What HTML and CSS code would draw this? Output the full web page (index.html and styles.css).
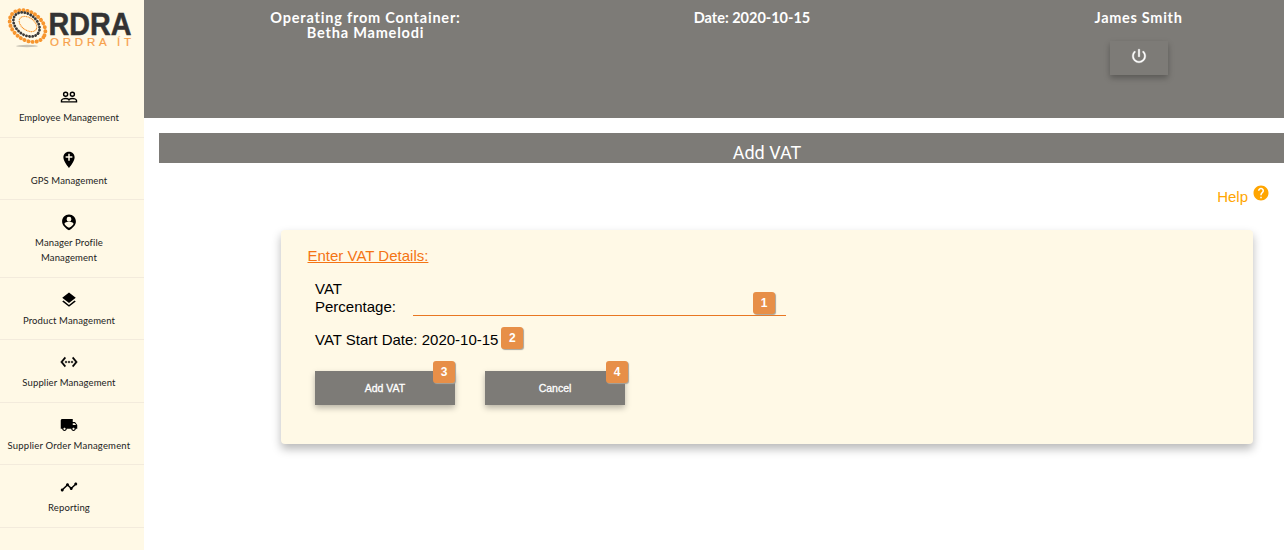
FILE: index.html
```html
<!DOCTYPE html>
<html lang="en">
<head>
<meta charset="utf-8">
<title>Add VAT</title>
<link rel="stylesheet" href="styles.css">
</head>
<body>
<div class="app">
  <aside class="sidebar">
    <svg class="logo" width="144" height="52" viewBox="0 0 144 52">
      <ellipse class="logo-shadow" cx="27" cy="46" rx="11" ry="1.2"/>
      <g fill="none" stroke-linecap="round">
        <ellipse class="ring-orange" cx="27.5" cy="26" rx="19.5" ry="13.800" transform="rotate(35 27.5 26)" stroke-width="3.9" stroke-dasharray="0.1 4"/>
        <ellipse class="ring-dark" cx="26.5" cy="24.5" rx="14.6" ry="10.2" transform="rotate(38 26.5 24.5)" stroke-width="2.8" stroke-dasharray="0.1 3"/>
        <ellipse class="ring-orange" cx="28" cy="24" rx="9.8" ry="6.3" transform="rotate(35 28 24)" stroke-width="1.3" stroke-dasharray="0.1 1.6"/>
      </g>
      <text class="logo-name" x="48.5" y="34.5" textLength="83" lengthAdjust="spacingAndGlyphs">RDRA</text>
      <text class="logo-sub" x="50" y="46" textLength="81">ORDRA ÍT</text>
    </svg>
    <nav class="menu">
      <a class="item"><svg class="icon" viewBox="0 0 24 24"><g fill="none" stroke="#000" stroke-width="1.9"><circle cx="7.5" cy="8.3" r="2.7"/><circle cx="16.5" cy="8.3" r="2.7"/><path d="M2 18.5v-1.700c0-1.500 3-2.700 5.500-2.700s4.500 1.200 4.500 2.700c0-1.500 2-2.700 4.500-2.700s5.500 1.200 5.500 2.700v1.700z"/></g></svg><span class="label">Employee Management</span></a>
      <a class="item"><svg class="icon" viewBox="0 0 24 24"><path d="M12 1c-4.700 0-7.500 3.500-7.500 7.600C4.500 14 12 22.500 12 22.500s7.500-8.500 7.500-13.900C19.500 4.500 16.700 1 12 1zm4.500 8H13v4h-2V9H7.500V7H11V3.500h2V7h3.500z"/></svg><span class="label">GPS Management</span></a>
      <a class="item"><svg class="icon" viewBox="0 0 24 24"><path d="M12 2C6.900 2 2.800 6.100 2.800 11.200c0 4.700 3.800 8.400 9.200 11.800 5.400-3.400 9.200-7.100 9.200-11.800C21.200 6.100 17.100 2 12 2zm0 3a3.200 3.200 0 1 1 0 6.400A3.200 3.200 0 0 1 12 5zm0 14.500c-3-1.500-5-3.200-6-5 .1-2 4-2.700 6-2.700s5.900.7 6 2.700c-1 1.800-3 3.500-6 5z"/></svg><span class="label">Manager Profile<br>Management</span></a>
      <a class="item"><svg class="icon" viewBox="0 0 24 24"><path d="M11.990 18.540l-7.370-5.730L3 14.070l9 7 9-7-1.630-1.270-7.380 5.740zM12 16l7.360-5.730L21 9l-9-7-9 7 1.630 1.270L12 16z"/></svg><span class="label">Product Management</span></a>
      <a class="item"><svg class="icon" viewBox="0 0 24 24"><path d="M7.770 6.760L6.230 5.480.82 12l5.410 6.520 1.540-1.280L3.420 12l4.350-5.240zM7 13h2v-2H7v2zm10-2h-2v2h2v-2zm-6 2h2v-2h-2v2zm6.770-7.520l-1.540 1.280L20.580 12l-4.350 5.240 1.540 1.280L23.180 12l-5.410-6.520z" stroke="#000" stroke-width=".5"/></svg><span class="label">Supplier Management</span></a>
      <a class="item"><svg class="icon" viewBox="0 0 24 24"><path d="M20 8h-3V4H3c-1.100 0-2 .9-2 2v11h2c0 1.660 1.340 3 3 3s3-1.340 3-3h6c0 1.660 1.340 3 3 3s3-1.340 3-3h2v-5l-3-4zM6 18.500c-.83 0-1.500-.67-1.500-1.500s.67-1.500 1.500-1.500 1.500.67 1.500 1.500-.67 1.500-1.500 1.500zm13.500-9l1.960 2.500H17V9.500h2.500zm-1.500 9c-.83 0-1.500-.67-1.500-1.500s.67-1.500 1.500-1.500 1.500.67 1.500 1.500-.67 1.500-1.500 1.500z"/></svg><span class="label label-wide">Supplier Order Management</span></a>
      <a class="item"><svg class="icon" viewBox="0 0 24 24"><path d="M23 8c0 1.100-.9 2-2 2-.18 0-.35-.02-.51-.07l-3.560 3.550c.05.16.07.34.07.52 0 1.100-.9 2-2 2s-2-.9-2-2c0-.18.02-.36.07-.52l-2.550-2.550c-.16.05-.34.07-.52.07s-.36-.02-.52-.07l-4.550 4.560c.05.160.07.330.07.510 0 1.100-.9 2-2 2s-2-.9-2-2 .9-2 2-2c.18 0 .35.02.51.07l4.560-4.550C8.020 9.360 8 9.180 8 9c0-1.100.9-2 2-2s2 .9 2 2c0 .18-.02.36-.07.52l2.550 2.550c.16-.05.34-.07.52-.07s.36.02.52.07l3.550-3.560C19.020 8.350 19 8.180 19 8c0-1.100.9-2 2-2s2 .9 2 2z"/></svg><span class="label">Reporting</span></a>
    </nav>
  </aside>
  <main class="main">
    <header class="topbar">
      <div class="top-cell container-name">Operating from Container:<br>Betha Mamelodi</div>
      <div class="top-cell date">Date: 2020-10-15</div>
      <div class="top-cell user">
        <span>James Smith</span>
        <button class="power" aria-label="Log out"><svg width="18" height="18" viewBox="0 0 24 24"><path fill="#fff" stroke="#fff" stroke-width=".5" d="M13 3h-2v10h2V3zm4.830 2.170l-1.420 1.420C17.990 7.860 19 9.810 19 12c0 3.870-3.130 7-7 7s-7-3.130-7-7c0-2.190 1.010-4.140 2.580-5.420L6.170 5.170C4.230 6.820 3 9.260 3 12c0 4.970 4.030 9 9 9s9-4.030 9-9c0-2.740-1.230-5.180-3.170-6.830z"/></svg></button>
      </div>
    </header>
    <h1 class="title">Add VAT</h1>
    <div class="help"><span>Help</span><svg width="18" height="18" viewBox="0 0 24 24"><path fill="orange" d="M12 2C6.480 2 2 6.480 2 12s4.480 10 10 10 10-4.480 10-10S17.520 2 12 2zm1 17h-2v-2h2v2zm2.070-7.750l-.9.920C13.450 12.900 13 13.500 13 15h-2v-.5c0-1.100.45-2.100 1.170-2.830l1.240-1.260c.37-.36.59-.86.59-1.410 0-1.100-.9-2-2-2s-2 .9-2 2H8c0-2.210 1.790-4 4-4s4 1.790 4 4c0 .88-.36 1.680-.93 2.250z"/></svg></div>
    <section class="card">
      <h2 class="card-title">Enter VAT Details:</h2>
      <div class="field">
        <label class="field-label">VAT Percentage:</label>
        <div class="input"><span class="badge b1">1</span></div>
      </div>
      <div class="start-date"><span class="start-text">VAT Start Date: 2020-10-15</span><span class="badge">2</span></div>
      <div class="actions">
        <button class="btn">Add VAT<span class="badge b3">3</span></button>
        <button class="btn">Cancel<span class="badge b4">4</span></button>
      </div>
    </section>
  </main>
</div>
</body>
</html>
```
FILE: styles.css
```css
* { box-sizing: border-box; }
body { margin: 0; overflow: hidden; background: #fff; font-family: "Liberation Sans", Arial, sans-serif; }
.app { display: flex; height: 550px; }
.sidebar { width: 144px; flex: none; background: #fff9e6; }
.logo { display: block; }
.logo-shadow { fill: #c9c3b5; }
.ring-orange { stroke: #f7962f; }
.ring-dark { stroke: #3c3a38; }
.logo-name { font: bold 32px "Liberation Sans", sans-serif; fill: #333; stroke: #333; stroke-width: .5px; }
.logo-sub { font: 11.5px "Liberation Sans", sans-serif; fill: #f7a04a; stroke: #f7a04a; stroke-width: .2px; }
.menu { padding-top: 23.3px; }
.item { display: flex; flex-direction: column; align-items: center; padding: 13px 0 11.5px; border-bottom: 1px solid #f3ebdc; }
.icon { width: 18px; height: 18px; margin-right: 6px; }
.label { margin: 4px 6px 0 0; font: 9.5px/15px Lato, sans-serif; letter-spacing: .12px; color: #222; text-align: center; white-space: nowrap; }
.label-wide { letter-spacing: .2px; }
.main { flex: 1; min-width: 0; }
.topbar { display: flex; height: 118px; background: #7d7b77; color: #fff; font: bold 14.5px/15px Lato, sans-serif; text-align: center; }
.top-cell { flex: none; padding-top: 10px; white-space: nowrap; }
.container-name { width: 443px; letter-spacing: .8px; }
.date { width: 330px; }
.user { width: 367px; display: flex; flex-direction: column; align-items: center; padding-left: 76px; letter-spacing: .7px; }
.power { display: flex; align-items: center; justify-content: center; width: 58px; height: 34px; margin-top: 16px; padding: 0 0 4px; border: 0; background: #7d7b77; box-shadow: 0 3px 6px rgba(0,0,0,.28); }
.title { height: 30px; margin: 15px 0 0 15px; padding: 5px 0 0 91px; background: #7d7b77; color: #fff; font: 400 18px/30px Roboto, sans-serif; text-align: center; }
.help { display: flex; justify-content: flex-end; gap: 4px; height: 67px; padding: 21px 14px 0 0; color: orange; font-size: 15px; line-height: 26px; }
.card { width: 972px; height: 214px; margin-left: 137px; padding: 16px 27px 0 26.5px; border-radius: 4px; background: #fff9e6; box-shadow: 0 5px 10px rgba(0,0,0,.28); color: #000; font-size: 15px; }
.card-title { margin: 0; color: #f47414; font-size: 15px; font-weight: 400; line-height: 20px; text-decoration: underline; }
.field { display: flex; margin: 14px 0 0 7.5px; }
.field-label { width: 98px; padding-right: 10px; line-height: 18px; }
.input { position: relative; width: 373px; height: 36px; border-bottom: 1px solid #e87722; }
.start-date { display: flex; align-items: center; gap: 3px; height: 24px; margin: 10px 0 0 7.5px; }
.start-text { padding-top: 2px; }
.actions { display: flex; gap: 30px; margin: 21px 0 0 7.5px; }
.btn { position: relative; width: 140px; height: 34px; padding: 0; border: 0; background: #7d7b77; color: #fff; font: 10.5px/34px "Liberation Sans", sans-serif; -webkit-text-stroke: .3px #fff; box-shadow: 0 3px 6px rgba(0,0,0,.28); }
.badge { display: block; width: 22px; height: 22px; border-radius: 3px; background: #e78f48; color: #fff; font: bold 12px/22px "Liberation Sans", sans-serif; -webkit-text-stroke: 0; text-align: center; box-shadow: 1px 1px 1px #a9a49a; }
.b1, .b3, .b4 { position: absolute; }
.b1 { top: 12px; left: 340px; }
.b3 { top: -10px; left: 118px; }
.b4 { top: -10px; left: 121px; }
```
